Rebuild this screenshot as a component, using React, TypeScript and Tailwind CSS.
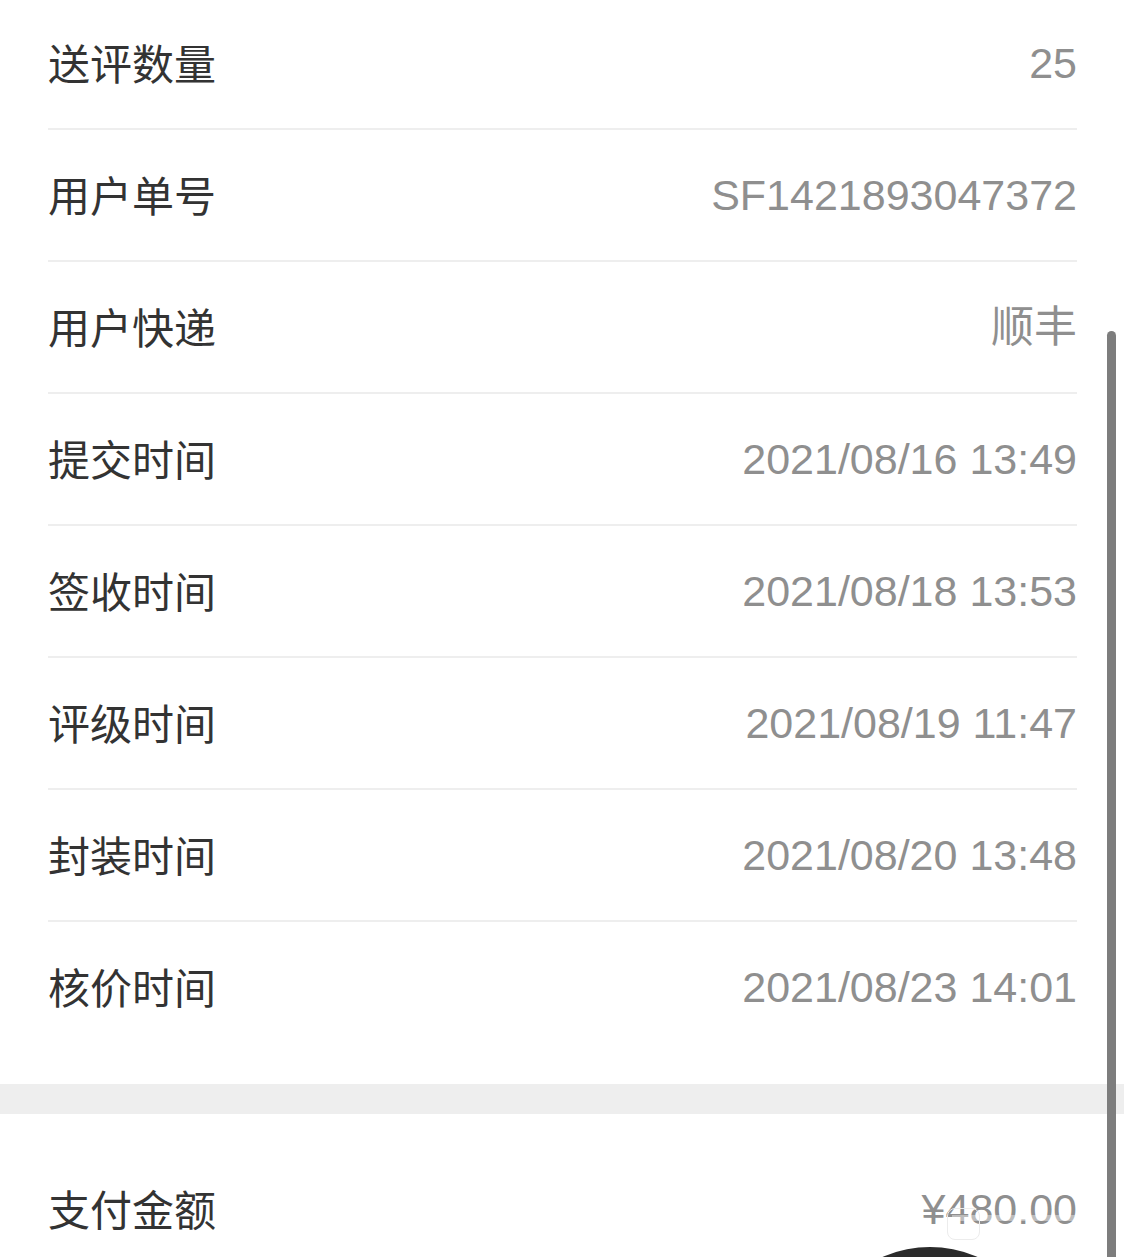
import React from "react";

const rows: [string, string][] = [
  ["送评数量", "25"],
  ["用户单号", "SF1421893047372"],
  ["用户快递", "顺丰"],
  ["提交时间", "2021/08/16 13:49"],
  ["签收时间", "2021/08/18 13:53"],
  ["评级时间", "2021/08/19 11:47"],
  ["封装时间", "2021/08/20 13:48"],
  ["核价时间", "2021/08/23 14:01"],
];

const labelFont = { fontFamily: '"Noto Sans CJK SC", "Noto Sans", sans-serif' };
const valueFont = { fontFamily: '"Liberation Sans", "Noto Sans CJK SC", sans-serif' };

export default function App() {
  return (
    <div className="relative w-[1124px] h-[1257px] overflow-hidden bg-white">
      <div className="pl-[48px] pr-[47px]">
        {rows.map(([label, value], i) => (
          <div key={label}>
            <div className="h-[128px] pb-[4px] flex items-center justify-between">
              <span className="text-[42px] leading-none text-[#333333]" style={labelFont}>
                {label}
              </span>
              <span className="pt-[3px] text-[43px] leading-none text-[#8f8f8f]" style={valueFont}>
                {value}
              </span>
            </div>
            {i < rows.length - 1 && <div className="h-[2px] bg-[#eeeeee] mb-[2px]" />}
          </div>
        ))}
      </div>
      <div className="h-[32px]" />
      <div className="h-[30px] bg-[#eeeeee]" />
      <div className="pl-[48px] pr-[47px] pt-[32px]">
        <div className="h-[128px] pb-[4px] flex items-center justify-between">
          <span className="text-[42px] leading-none text-[#333333]" style={labelFont}>
            支付金额
          </span>
          <span className="relative pt-[3px] text-[43px] leading-none text-[#8f8f8f]" style={valueFont}>
            ¥480.00
            <span className="absolute left-[30px] right-0 top-[30px] h-[6px] bg-white/40" />
          </span>
        </div>
      </div>

      {/* faint watermark icon */}
      <div className="absolute left-[947px] top-[1208px] w-[33px] h-[32px] rounded-[8px] border border-[#ececec]" />

      {/* floating dark button partially visible */}
      <div className="absolute left-[812px] top-[1247px] w-[236px] h-[236px] rounded-full bg-[#2b2b2b]" />

      {/* scrollbar */}
      <div className="absolute left-[1107px] top-[331px] w-[9px] h-[940px] rounded-full bg-[#7d7d7d]" />
    </div>
  );
}
